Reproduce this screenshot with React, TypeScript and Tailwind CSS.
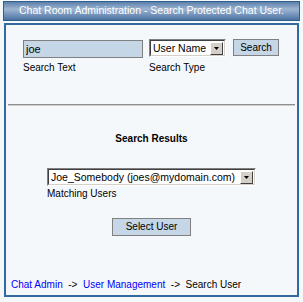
import React, { useState } from 'react';

const font = { fontFamily: '"Liberation Sans", Arial, sans-serif' };

function FakeSelect({ value, width }: { value: string; width: string }) {
  return (
    <div
      className={`${width} h-[18px] border border-t-[#808080] border-l-[#808080] border-r-white border-b-white`}
    >
      <div className="h-full flex items-center border border-t-[#404040] border-l-[#404040] border-r-[#d4d0c8] border-b-[#d4d0c8] bg-white">
        <span className="flex-1 pl-[2px] text-[10.5px] leading-[14px] text-black whitespace-nowrap overflow-hidden">
          {value}
        </span>
        <div className="w-[13px] h-[13px] mr-px flex items-center justify-center bg-[#d4d0c8] border border-t-white border-l-white border-r-[#404040] border-b-[#404040]">
          <svg width="5" height="3" viewBox="0 0 5 3">
            <path d="M0 0h5L2.5 3z" fill="#000" />
          </svg>
        </div>
      </div>
    </div>
  );
}

function App() {
  const [query, setQuery] = useState('joe');

  return (
    <div className="w-[303px] h-[302px] bg-[#f5f8fb] pt-px" style={font}>
      <div className="mx-[3px] h-[20px] border border-[#2f5f8f] bg-[linear-gradient(to_bottom,#5c80ab_0%,#9db5d1_40%,#7594bb_70%,#4b72a0_100%)] flex items-center justify-center">
        <span className="text-[10.5px] text-white whitespace-nowrap">
          Chat Room Administration - Search Protected Chat User.
        </span>
      </div>

      <div className="ml-[4px] mt-[2px] w-[295px] h-[274px] border-2 border-[#3468a0] flex flex-col">
        <div className="flex items-start pl-[17px] pt-[14px]">
          <div className="flex flex-col">
            <input
              value={query}
              onChange={(e) => setQuery(e.target.value)}
              className="w-[120px] h-[18px] mt-px border border-[#808080] bg-[#c5d6e6] px-[2px] text-[11px] text-black outline-none"
            />
            <span className="mt-[4px] text-[10px] leading-[12px] text-black">Search Text</span>
          </div>
          <div className="flex flex-col ml-[6px]">
            <FakeSelect value="User Name" width="w-[77px]" />
            <span className="mt-[5px] text-[10px] leading-[12px] text-black">Search Type</span>
          </div>
          <button className="ml-[7px] w-[46px] h-[17px] border border-[#808080] bg-[#c5d6e6] text-[10px] leading-none text-black">
            Search
          </button>
        </div>

        <div className="mx-[2px] mt-[30px] h-[2px] border-t border-t-[#8f8f8f] border-b border-b-[#cfcfcf]" />

        <div className="mt-[27px] text-center text-[10px] font-bold leading-[12px] text-black">
          Search Results
        </div>

        <div className="mt-[23px] flex justify-center">
          <div className="flex flex-col">
            <FakeSelect value="Joe_Somebody (joes@mydomain.com)" width="w-[209px]" />
            <span className="mt-[2px] text-[10px] leading-[12px] text-black">Matching Users</span>
          </div>
        </div>

        <div className="mt-[18px] flex justify-center">
          <button className="w-[79px] h-[18px] border border-[#808080] bg-[#c5d6e6] text-[10px] leading-none text-black">
            Select User
          </button>
        </div>

        <div className="mt-auto mb-[4px] pl-[5px] text-[10px] leading-[12px] whitespace-nowrap">
          <a href="#" className="text-[#0000ff]">Chat Admin</a>
          <span className="text-black">&nbsp; -&gt; &nbsp;</span>
          <a href="#" className="text-[#0000ff]">User Management</a>
          <span className="text-black">&nbsp; -&gt; &nbsp;Search User</span>
        </div>
      </div>
    </div>
  );
}

export default App;
